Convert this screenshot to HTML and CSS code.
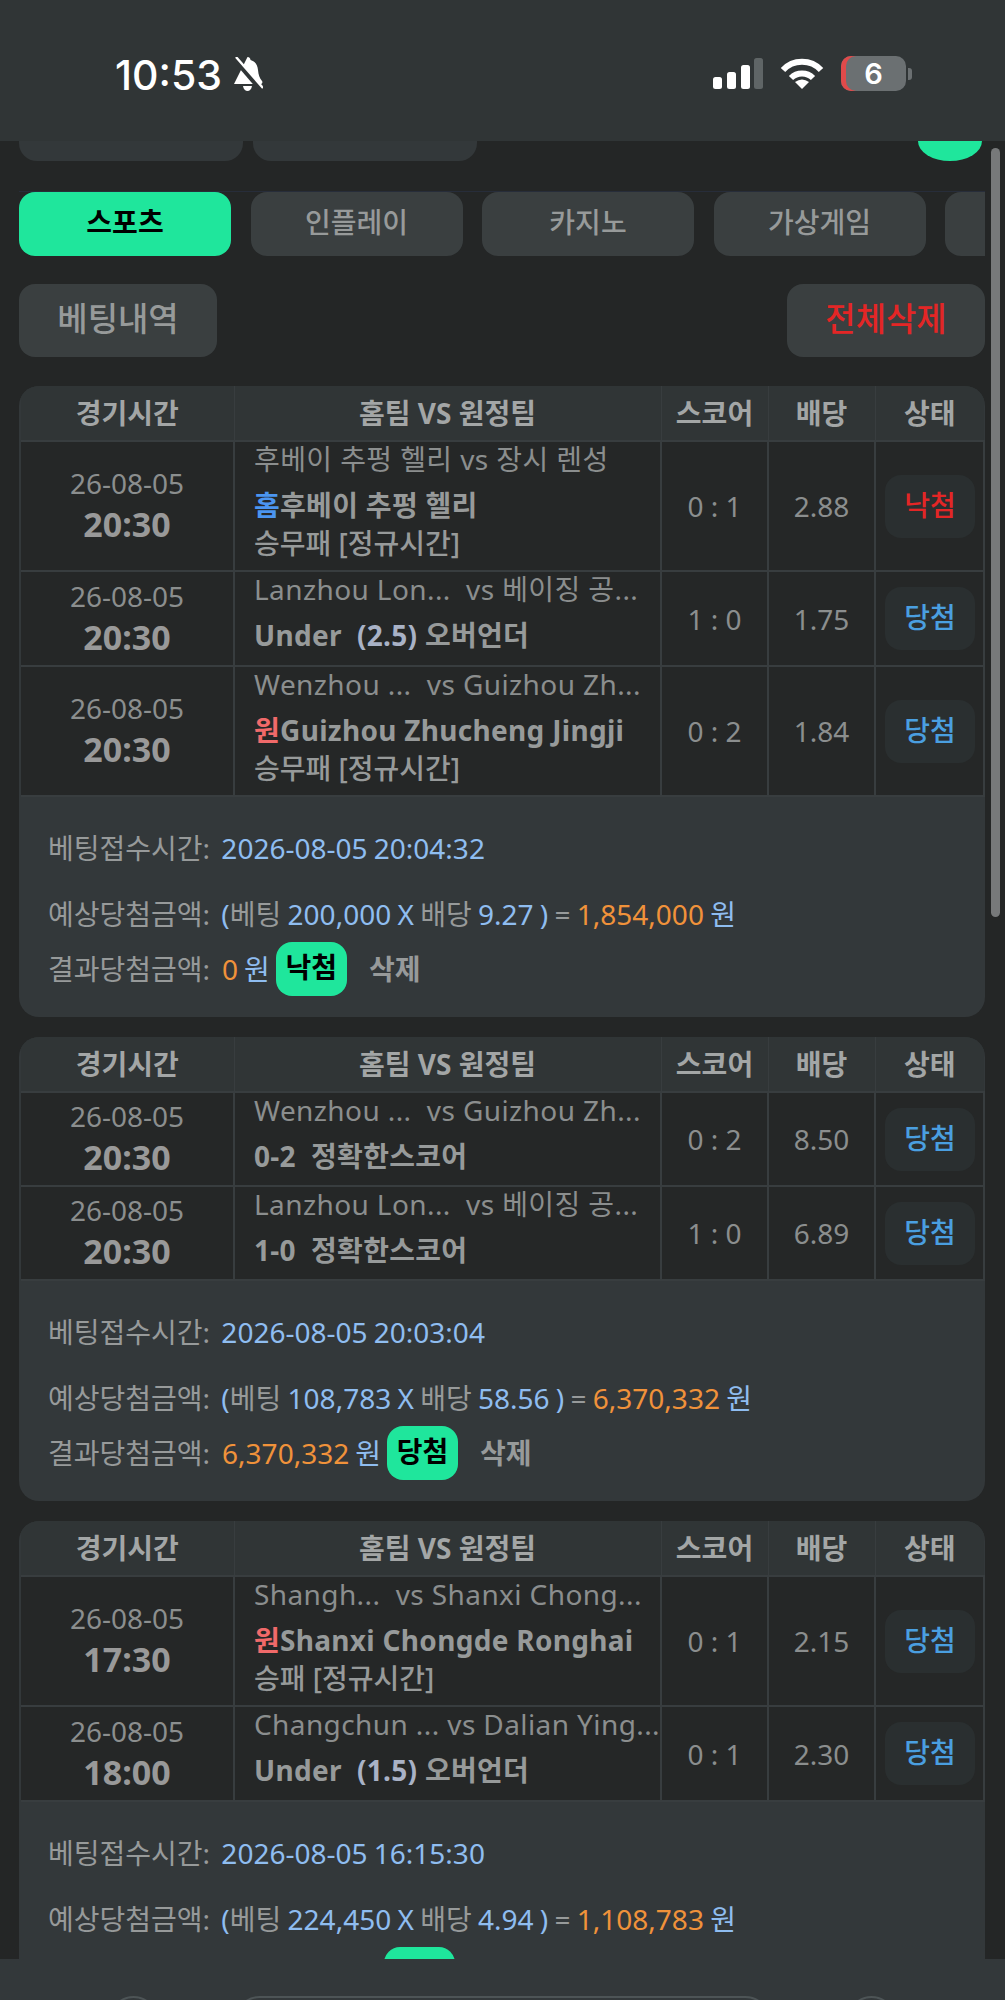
FILE: index.html
```html
<!DOCTYPE html>
<html lang="ko">

<head>
    <meta charset="UTF-8">
    <title>베팅내역</title>
    <link rel="stylesheet" href="styles.css">
</head>

<body>
    <div class="page">
        <div class="status">
            <div class="clock">
                <span class="time">10:53</span>
                <svg class="bell" viewBox="0 0 31 35">
                    <path fill="#fff" d="M15.5 0c2 0 3 1.5 3 3c5 1.5 7 5 7.5 10c.5 5 1.5 8 4 11c1 1.5 0 3-1.5 3H2c-1.500-2.500-3c2.500-3 3.500-6 4-11c.5-5 2.500-8.500 7-10c0-1.500 1-3 3-3z" />
                    <path fill="#fff" d="M11 29h9c-.5 3.500-2.500 5-4.500 5s-4-1.500-4.500-5z" />
                    <path stroke="#303536" stroke-width="5" d="M1 0L31 35" />
                    <path stroke="#fff" stroke-width="2.400" d="M4 0L31 31" />
                </svg>
            </div>
            <div class="indicators">
                <svg class="signal" viewBox="0 0 50 31">
                    <rect x="0" y="19" width="9" height="12" rx="2.500" fill="#fff" />
                    <rect x="14" y="14" width="9" height="17" rx="2.500" fill="#fff" />
                    <rect x="28" y="7" width="9" height="24" rx="2.500" fill="#fff" />
                    <rect x="41" y="0" width="9" height="31" rx="2.500" fill="#5f6566" />
                </svg>
                <svg class="wifi" viewBox="0 0 44 32">
                    <path fill="none" stroke="#fff" stroke-width="6" d="M3 13C13 2 31 2 41 13" />
                    <path fill="none" stroke="#fff" stroke-width="6" d="M11 21C17 15 27 15 33 21" />
                    <path fill="#fff" d="M22 32L15 25Q22 20 29 25Z" />
                </svg>
                <div class="battery">
                    <div class="battery-body">6</div>
                    <div class="battery-nub"></div>
                </div>
            </div>
        </div>

        <div class="content">
            <div class="sub-row">
                <div class="sub-pill"></div>
                <div class="sub-pill"></div>
                <div class="sub-dot"></div>
            </div>

            <div class="tabs">
                <div class="tab active">스포츠</div>
                <div class="tab">인플레이</div>
                <div class="tab">카지노</div>
                <div class="tab">가상게임</div>
                <div class="tab"></div>
            </div>

            <div class="actions">
                <div class="btn">베팅내역</div>
                <div class="btn red">전체삭제</div>
            </div>

            <!-- 1 -->
            <div class="card">
                <table class="bets">
                    <colgroup>
                        <col class="c-time"><col class="c-match"><col class="c-score"><col class="c-odds"><col class="c-state">
                    </colgroup>
                    <tr>
                        <th>경기시간</th><th>홈팀 VS 원정팀</th><th>스코어</th><th>배당</th><th>상태</th>
                    </tr>
                    <tr>
                        <td class="when"><div>26-08-05</div><b>20:30</b></td>
                        <td class="match">
                            <div class="teams">후베이 추펑 헬리 vs 장시 렌성</div>
                            <div class="pick"><span class="home">홈</span>후베이 추펑 헬리</div>
                            <div class="kind">승무패 [정규시간]</div>
                        </td>
                        <td class="num">0 : 1</td>
                        <td class="num">2.88</td>
                        <td><div class="state lost">낙첨</div></td>
                    </tr>
                    <tr class="tall">
                        <td class="when"><div>26-08-05</div><b>20:30</b></td>
                        <td class="match">
                            <div class="teams">Lanzhou Lon...&nbsp; vs 베이징 공...</div>
                            <div class="pick">Under&nbsp; <span class="line">(2.5)</span> 오버언더</div>
                        </td>
                        <td class="num">1 : 0</td>
                        <td class="num">1.75</td>
                        <td><div class="state won">당첨</div></td>
                    </tr>
                    <tr>
                        <td class="when"><div>26-08-05</div><b>20:30</b></td>
                        <td class="match">
                            <div class="teams">Wenzhou ...&nbsp; vs Guizhou Zh...</div>
                            <div class="pick"><span class="away">원</span>Guizhou Zhucheng Jingji</div>
                            <div class="kind">승무패 [정규시간]</div>
                        </td>
                        <td class="num">0 : 2</td>
                        <td class="num">1.84</td>
                        <td><div class="state won">당첨</div></td>
                    </tr>
                </table>
                <div class="summary">
                    <div class="sum-line"><span class="label">베팅접수시간:</span> <span class="blue">2026-08-05 20:04:32</span></div>
                    <div class="sum-line gap"><span class="label">예상당첨금액:</span> <span class="blue">(</span>베팅 <span class="blue">200,000 X</span> 배당 <span class="blue">9.27 )</span> = <span class="orange">1,854,000</span> <span class="blue">원</span></div>
                    <div class="sum-line last"><span class="label">결과당첨금액:</span> <span class="orange">0</span> <span class="blue">원</span> <span class="badge">낙첨</span><span class="del">삭제</span></div>
                </div>
            </div>

            <!-- 2 -->
            <div class="card">
                <table class="bets">
                    <colgroup>
                        <col class="c-time"><col class="c-match"><col class="c-score"><col class="c-odds"><col class="c-state">
                    </colgroup>
                    <tr>
                        <th>경기시간</th><th>홈팀 VS 원정팀</th><th>스코어</th><th>배당</th><th>상태</th>
                    </tr>
                    <tr>
                        <td class="when"><div>26-08-05</div><b>20:30</b></td>
                        <td class="match">
                            <div class="teams">Wenzhou ...&nbsp; vs Guizhou Zh...</div>
                            <div class="pick">0-2&nbsp; 정확한스코어</div>
                        </td>
                        <td class="num">0 : 2</td>
                        <td class="num">8.50</td>
                        <td><div class="state won">당첨</div></td>
                    </tr>
                    <tr>
                        <td class="when"><div>26-08-05</div><b>20:30</b></td>
                        <td class="match">
                            <div class="teams">Lanzhou Lon...&nbsp; vs 베이징 공...</div>
                            <div class="pick">1-0&nbsp; 정확한스코어</div>
                        </td>
                        <td class="num">1 : 0</td>
                        <td class="num">6.89</td>
                        <td><div class="state won">당첨</div></td>
                    </tr>
                </table>
                <div class="summary">
                    <div class="sum-line"><span class="label">베팅접수시간:</span> <span class="blue">2026-08-05 20:03:04</span></div>
                    <div class="sum-line gap"><span class="label">예상당첨금액:</span> <span class="blue">(</span>베팅 <span class="blue">108,783 X</span> 배당 <span class="blue">58.56 )</span> = <span class="orange">6,370,332</span> <span class="blue">원</span></div>
                    <div class="sum-line last"><span class="label">결과당첨금액:</span> <span class="orange">6,370,332</span> <span class="blue">원</span> <span class="badge">당첨</span><span class="del">삭제</span></div>
                </div>
            </div>

            <!-- 3 -->
            <div class="card">
                <table class="bets">
                    <colgroup>
                        <col class="c-time"><col class="c-match"><col class="c-score"><col class="c-odds"><col class="c-state">
                    </colgroup>
                    <tr>
                        <th>경기시간</th><th>홈팀 VS 원정팀</th><th>스코어</th><th>배당</th><th>상태</th>
                    </tr>
                    <tr>
                        <td class="when"><div>26-08-05</div><b>17:30</b></td>
                        <td class="match">
                            <div class="teams">Shangh...&nbsp; vs Shanxi Chong...</div>
                            <div class="pick"><span class="away">원</span>Shanxi Chongde Ronghai</div>
                            <div class="kind">승패 [정규시간]</div>
                        </td>
                        <td class="num">0 : 1</td>
                        <td class="num">2.15</td>
                        <td><div class="state won">당첨</div></td>
                    </tr>
                    <tr class="tall">
                        <td class="when"><div>26-08-05</div><b>18:00</b></td>
                        <td class="match">
                            <div class="teams">Changchun ... vs Dalian Ying...</div>
                            <div class="pick">Under&nbsp; <span class="line">(1.5)</span> 오버언더</div>
                        </td>
                        <td class="num">0 : 1</td>
                        <td class="num">2.30</td>
                        <td><div class="state won">당첨</div></td>
                    </tr>
                </table>
                <div class="summary">
                    <div class="sum-line"><span class="label">베팅접수시간:</span> <span class="blue">2026-08-05 16:15:30</span></div>
                    <div class="sum-line gap"><span class="label">예상당첨금액:</span> <span class="blue">(</span>베팅 <span class="blue">224,450 X</span> 배당 <span class="blue">4.94 )</span> = <span class="orange">1,108,783</span> <span class="blue">원</span></div>
                    <div class="sum-line last"><span class="badge cut"></span></div>
                </div>
            </div>

            <div class="scrollbar"></div>
        </div>

        <div class="bottom">
            <div class="nav-circle"></div>
            <div class="nav-pill"></div>
            <div class="nav-circle"></div>
        </div>
    </div>
</body>

</html>
```

FILE: styles.css
```css
* {
    box-sizing: border-box;
}

html,
body {
    margin: 0;
    height: 2000px;
    overflow: hidden;
    background: #242626;
}

body {
    font-family: "Noto Sans", "Noto Sans CJK KR", sans-serif;
    font-size: 28px;
    color: #979a9a;
}

.page {
    width: 1005px;
    height: 2000px;
    display: flex;
    flex-direction: column;
}

/* status bar */
.status {
    height: 141px;
    flex: none;
    background: #303536;
    display: flex;
    justify-content: space-between;
    padding: 56px 93px 0 115px;
}

.clock {
    display: flex;
    align-items: flex-start;
    gap: 10px;
}

.time {
    font-family: Inter, "Liberation Sans", sans-serif;
    font-size: 41px;
    font-weight: 500;
    line-height: 38px;
    color: #fff;
}

.bell {
    width: 31px;
    height: 35px;
    margin-top: 1px;
}

.indicators {
    display: flex;
    align-items: flex-start;
}

.signal {
    width: 50px;
    height: 31px;
    margin-top: 2px;
}

.wifi {
    width: 44px;
    height: 32px;
    margin: 1px 17px 0;
}

.battery {
    display: flex;
    align-items: center;
}

.battery-body {
    width: 65px;
    height: 35px;
    border-radius: 10px;
    box-shadow: inset 5px 0 0 #e04a4a;
    background: #6b7072;
    color: #fff;
    font-family: Inter, "Liberation Sans", sans-serif;
    font-size: 29px;
    font-weight: 600;
    line-height: 35px;
    text-align: center;
}

.battery-nub {
    width: 4px;
    height: 12px;
    margin-left: 2px;
    border-radius: 0 3px 3px 0;
    background: #6b7072;
}

/* content */
.content {
    flex: 1;
    position: relative;
    overflow: hidden;
    padding: 0 20px 0 19px;
}

.sub-row {
    display: flex;
    gap: 10px;
    height: 20px;
}

.sub-pill {
    width: 224px;
    border-radius: 0 0 18px 18px;
    background: #33383a;
}

.sub-dot {
    width: 64px;
    margin-left: auto;
    margin-right: 3px;
    border-radius: 0 0 32px 32px / 0 0 20px 20px;
    background: #1fe69c;
}

.tabs {
    display: flex;
    gap: 19.500px;
    margin-top: 30px;
    border-top: 1px solid #272d3a;
    overflow: hidden;
}

.tab {
    flex: none;
    width: 212px;
    height: 64px;
    border-radius: 16px;
    background: #3a3f40;
    text-align: center;
    line-height: 60px;
    font-weight: 500;
}

.tab.active {
    background: #1fe69c;
    color: #000;
    font-weight: 700;
}

.actions {
    display: flex;
    justify-content: space-between;
    margin-top: 28px;
}

.btn {
    width: 198px;
    height: 73px;
    border-radius: 16px;
    background: #3a3f40;
    font-size: 33px;
    font-weight: 500;
    line-height: 70px;
    text-align: center;
}

.btn.red {
    color: #e32626;
}

/* cards */
.card {
    margin-top: 20px;
    border-radius: 20px;
    background: #33383a;
    overflow: hidden;
}

.actions + .card {
    margin-top: 29px;
}

.bets {
    width: 963px;
    margin-left: 2px;
    table-layout: fixed;
    border-collapse: collapse;
}

.c-time {
    width: 213px;
}

.c-match {
    width: 427px;
}

.c-score,
.c-odds {
    width: 107px;
}

.c-state {
    width: 109px;
}

.bets th {
    height: 55px;
    padding: 0;
    font-size: 28px;
    font-weight: 700;
    color: #a3a6a6;
    background: #303536;
    border-left: 1px solid #383d3f;
    line-height: 54px;
}

.bets td {
    height: 94px;
    padding: 0;
    background: #252727;
    border: 2px solid #383d3f;
    border-width: 2px 2px 0;
    text-align: center;
    vertical-align: middle;
}

.bets tr:last-child td {
    border-bottom: 2px solid #383d3f;
}

.bets tr.tall td {
    height: 95px;
}

.bets th:first-child,
.bets td:first-child {
    border-left: 0;
}

.bets td.when {
    padding-bottom: 4px;
}

.when div {
    line-height: 40px;
    color: #8b8e8e;
}

.when b {
    display: block;
    font-size: 34px;
    line-height: 42px;
    font-weight: 700;
    color: #999;
}

.bets td.match {
    padding: 0 0 8px 19px;
    text-align: left;
    vertical-align: top;
    white-space: nowrap;
    overflow: hidden;
}

.teams {
    line-height: 34px;
    letter-spacing: 0.4px;
    color: #8b8e8e;
}

.pick {
    margin-top: 10px;
    line-height: 38px;
    letter-spacing: 0.3px;
    font-weight: 700;
    color: #979a9a;
}

.kind {
    line-height: 38px;
    font-weight: 500;
    color: #979a9a;
}

.line {
    color: #a9b2c6;
}

.home {
    color: #4b95f0;
}

.away {
    color: #f06a6a;
}

.num {
    color: #8b8e8e;
}

.state {
    width: 90px;
    height: 63px;
    margin: 0 0 0 9px;
    border-radius: 16px;
    background: #2a2f30;
    line-height: 60px;
    font-weight: 500;
}

.state.lost {
    color: #e32626;
}

.state.won {
    color: #4a9fe0;
}

.summary {
    padding: 30px 0 21px 29px;
    white-space: nowrap;
    word-spacing: -1px;
}

.label {
    margin-right: 5px;
}

.sum-line {
    line-height: 42px;
}

.sum-line.gap {
    margin-top: 24px;
}

.sum-line.last {
    display: flex;
    align-items: center;
    gap: 6px;
    height: 54px;
    margin-top: 7px;
}

.sum-line.last .label {
    margin-right: 6px;
}

.blue {
    color: #8fbdf0;
}

.orange {
    color: #f0923a;
}

.badge {
    width: 71px;
    height: 54px;
    border-radius: 16px;
    background: #1fe69c;
    color: #000;
    font-weight: 700;
    line-height: 50px;
    text-align: center;
}

.badge.cut {
    margin-left: 336px;
}

.del {
    margin-left: 16px;
    font-weight: 700;
}

.scrollbar {
    position: absolute;
    top: 7px;
    right: 5px;
    width: 9px;
    height: 769px;
    border-radius: 5px;
    background: #77797a;
}

/* bottom bar */
.bottom {
    height: 41px;
    flex: none;
    background: #33383a;
    display: flex;
    align-items: flex-start;
    padding: 37px 0 0 109px;
    overflow: hidden;
}

.nav-circle {
    width: 49px;
    height: 49px;
    border: 2px solid #4d5456;
    border-radius: 50%;
}

.nav-pill {
    width: 535px;
    height: 49px;
    margin: 0 77px;
    border: 2px solid #4d5456;
    border-radius: 25px;
}
```
